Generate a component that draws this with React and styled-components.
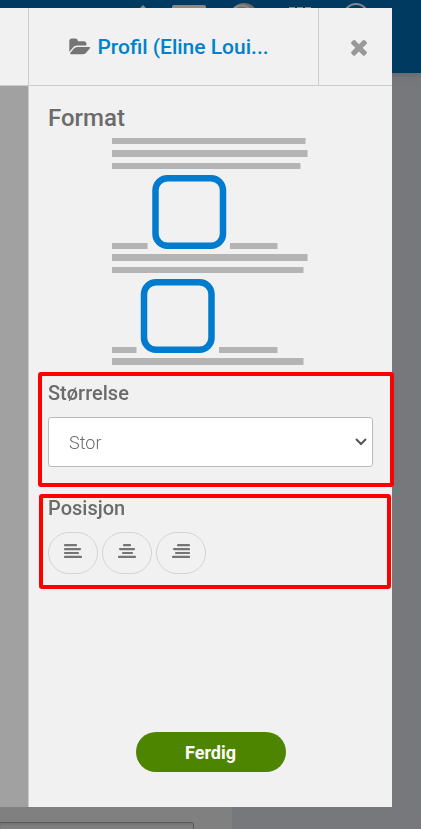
import { useState } from "react";
import React from 'react';
import styled, { createGlobalStyle } from 'styled-components';

const GlobalStyle = createGlobalStyle`
    * {
        box-sizing: border-box;
    }
    body {
        margin: 0;
        background-color: #77787b;
        font-family: Roboto, "Noto Sans", sans-serif;
        color: #6b6b6b;
    }
`
const Page = styled.div`
    min-height: 100vh;
    display: flex;
    flex-direction: column;
`
const TopBar = styled.header`
    height: 73px;
    background-color: #003a61;
    box-shadow: 0 1px 8px #586470;
    display: flex;
    justify-content: flex-end;
    align-items: flex-start;

    > svg {
        width: 280px;
        height: 30px;
        margin-right: 1px;
    }
`
const Background = styled.main`
    flex: 1;
    display: flex;
    flex-direction: column;
    justify-content: flex-end;
    width: 55%;
    background-color: #808080;
`
const BackgroundInput = styled.input`
    height: 32px;
    margin: 0 38px -25px 0;
    background-color: #808080;
    border: 1px solid #5c5c5c;
    border-left: none;
    border-radius: 0 3px 0 0;
    box-shadow: inset 0 2px 2px #747474;
`
const BackgroundClip = styled.div`
    overflow: hidden;
    padding-top: 10px;
    display: flex;
    flex-direction: column;
`
const Modal = styled.div`
    position: fixed;
    top: 8px;
    right: 29px;
    bottom: 22px;
    left: 0;
    display: flex;
`
const Strip = styled.div`
    width: 28px;
    background-color: #a1a1a1;

    > div {
        height: 78px;
        background-color: #f1f1f1;
        border-bottom: 1px solid #ccc;
    }
`
const Panel = styled.section`
    flex: 1;
    min-width: 0;
    display: flex;
    flex-direction: column;
    background-color: #f1f1f1;
    border-left: 1px solid #ccc;
`
const PanelHeader = styled.div`
    height: 78px;
    display: flex;
    border-bottom: 1px solid #ccc;
`
const Title = styled.h1`
    flex: 1;
    margin: 0;
    padding-right: 9px;
    display: flex;
    justify-content: center;
    align-items: center;
    gap: 6px;
    font-size: 21px;
    font-weight: 500;
    color: #0081cc;
    white-space: nowrap;

    > svg {
        width: 22px;
        height: 20px;
        fill: #757575;
    }
`
const CloseButton = styled.button`
    width: 74px;
    padding: 0 0 0 6px;
    display: flex;
    justify-content: center;
    align-items: center;
    background: none;
    border: none;
    border-left: 1px solid #ccc;

    > svg {
        width: 24px;
        height: 24px;
        fill: #999;
    }
`
const Heading = styled.h2`
    margin: 17px 19px 5px;
    font-size: 24px;
    line-height: 30px;
    font-weight: 500;
`
const Preview = styled.svg`
    display: block;
    width: 198px;
    height: 228px;
    margin: 0 auto 6px;
    flex-shrink: 0;
`
const Marked = styled.div`
    margin: 0 ${props => props.$wide ? '-2px 7px 9px' : '1px 0 10px'};
    padding: ${props => props.$wide ? '7px 17px 16px 6px' : '0 17px 11px 5px'};
    border: 4px solid #ff0000;
    border-radius: 3px;
`
const Label = styled.label`
    display: block;
    margin-bottom: 14px;
    font-size: 20px;
    line-height: 20px;
    font-weight: 500;
`
const SelectBox = styled.div`
    display: grid;
    align-items: center;

    > * {
        grid-area: 1 / 1;
    }
    > svg {
        width: 12px;
        height: 8px;
        margin-right: 6px;
        justify-self: end;
        pointer-events: none;
    }
`
const Select = styled.select`
    width: 100%;
    height: 50px;
    padding: 0 20px;
    appearance: none;
    background-color: white;
    border: 1px solid #bbb;
    border-radius: 3px;
    color: #6b6b6b;
    font-family: inherit;
    font-size: 18px;
    font-weight: 300;
`
const ButtonRow = styled.div`
    display: flex;
    gap: 4px;
`
const AlignButton = styled.button`
    width: 50px;
    height: 42px;
    padding: 0 0 4px;
    display: flex;
    justify-content: center;
    align-items: center;
    background: none;
    border: 1px solid #d3d3d3;
    border-radius: 21px;

    > svg {
        width: 18px;
        height: 14px;
        stroke: #757575;
    }
`
const PanelFooter = styled.div`
    margin-top: auto;
    padding-bottom: 35px;
    display: flex;
    justify-content: center;
`
const DoneButton = styled.button`
    width: 150px;
    height: 40px;
    border: none;
    border-radius: 20px;
    background-color: #4e8500;
    color: white;
    font-family: inherit;
    font-size: 18px;
    font-weight: 700;
`

const alignments = [
    { name: 'Venstre', lines: [[1, 12], [1, 16], [1, 14], [1, 17]] },
    { name: 'Midtstilt', lines: [[6, 12], [2, 16], [5, 14], [1, 17]] },
    { name: 'Høyre', lines: [[6, 17], [2, 17], [4, 17], [1, 17]] },
];

const FolderIcon = () => (
    <svg viewBox="0 0 1920 1792" aria-hidden="true">
        <path d="M1879 952q0 31-31 66l-336 396q-43 51-120.500 86.500t-143.500 35.500h-1088q-34 0-60.500-13t-26.500-43q0-31 31-66l336-396q43-51 120.500-86.500t143.500-35.500h1088q34 0 60.500 13t26.500 43zm-343-344v160h-832q-94 0-197 47.500t-164 119.500l-337 396-5 6q0-4-.5-12.500t-.5-12.500v-960q0-92 66-158t158-66h320q92 0 158 66t66 158v32h544q92 0 158 66t66 158z" />
    </svg>
);

const CloseIcon = () => (
    <svg viewBox="0 0 1792 1792" aria-hidden="true">
        <path d="M1490 1322q0 40-28 68l-136 136q-28 28-68 28t-68-28l-294-294-294 294q-28 28-68 28t-68-28l-136-136q-28-28-28-68t28-68l294-294-294-294q-28-28-28-68t28-68l136-136q28-28 68-28t68 28l294 294 294-294q28-28 68-28t68 28l136 136q28 28 28 68t-28 68l-294 294 294 294q28 28 28 68z" />
    </svg>
);

const TopBarIcons = () => (
    <svg viewBox="140 0 280 30" fill="#898989" aria-hidden="true">
        <path d="M143 5l14 14h-28z" />
        <rect x="172" y="5" width="34" height="24" rx="2" />
        <circle cx="244" cy="17" r="14" fill="#6d6d68" />
        <path d="M234 8q8-5 15 0" stroke="#898989" strokeWidth="2" fill="none" />
        <path d="M289 7h6v6h-6zM297 7h6v6h-6zM305 7h6v6h-6z" />
        <circle cx="356" cy="16" r="12" fill="none" stroke="#898989" strokeWidth="2" />
    </svg>
);

const FormatPreview = () => (
    <Preview viewBox="0 0 198 228" aria-hidden="true">
        <g fill="#b4b4b4">
            <rect y="0" width="193.500" height="6" />
            <rect y="12" width="195.500" height="7" />
            <rect y="25" width="188.500" height="6" />
            <rect y="105" width="35.500" height="6" />
            <rect x="118" y="105" width="47.500" height="6" />
            <rect y="116" width="195.500" height="7" />
            <rect y="129" width="191.500" height="6" />
            <rect y="209" width="24.500" height="6" />
            <rect x="107" y="209" width="58.500" height="6" />
            <rect y="220" width="191.500" height="7" />
        </g>
        <g fill="none" stroke="#007bce" strokeWidth="6.5">
            <rect x="43.500" y="40.250" width="67.500" height="67.500" rx="12" />
            <rect x="32" y="144.250" width="67.500" height="67.500" rx="12" />
        </g>
    </Preview>
);

const App = () => {
    const [size, setSize] = useState('stor');
    const [position, setPosition] = useState(null);

    return (
        <>
            <GlobalStyle />
            <Page>
                <TopBar>
                    <TopBarIcons />
                </TopBar>
                <Background>
                    <BackgroundClip>
                        <BackgroundInput aria-label="Tekst" />
                    </BackgroundClip>
                </Background>
            </Page>
            <Modal role="dialog">
                <Strip>
                    <div />
                </Strip>
                <Panel>
                    <PanelHeader>
                        <Title>
                            <FolderIcon />
                            Profil (Eline Loui...
                        </Title>
                        <CloseButton aria-label="Lukk">
                            <CloseIcon />
                        </CloseButton>
                    </PanelHeader>
                    <Heading>Format</Heading>
                    <FormatPreview />
                    <Marked $wide>
                        <Label htmlFor="size">Størrelse</Label>
                        <SelectBox>
                            <Select id="size" value={size} onChange={(e) => setSize(e.target.value)}>
                                <option value="liten">Liten</option>
                                <option value="medium">Medium</option>
                                <option value="stor">Stor</option>
                            </Select>
                            <svg viewBox="0 0 12 8" fill="none" stroke="#555" strokeWidth="2" aria-hidden="true">
                                <path d="M1 1l5 5 5-5" />
                            </svg>
                        </SelectBox>
                    </Marked>
                    <Marked>
                        <Label as="div" id="position">Posisjon</Label>
                        <ButtonRow role="group" aria-labelledby="position">
                            {alignments.map(({ name, lines }) => (
                                <AlignButton
                                    key={name}
                                    aria-label={name}
                                    aria-pressed={position === name}
                                    onClick={() => setPosition(name)}
                                >
                                    <svg viewBox="0 0 18 14" strokeWidth="2.200" strokeLinecap="round">
                                        {lines.map(([from, to], i) => (
                                            <path key={i} d={`M${from} ${1.200 + i * 3.900}H${to}`} />
                                        ))}
                                    </svg>
                                </AlignButton>
                            ))}
                        </ButtonRow>
                    </Marked>
                    <PanelFooter>
                        <DoneButton>Ferdig</DoneButton>
                    </PanelFooter>
                </Panel>
            </Modal>
        </>
    );
};

export default App;
